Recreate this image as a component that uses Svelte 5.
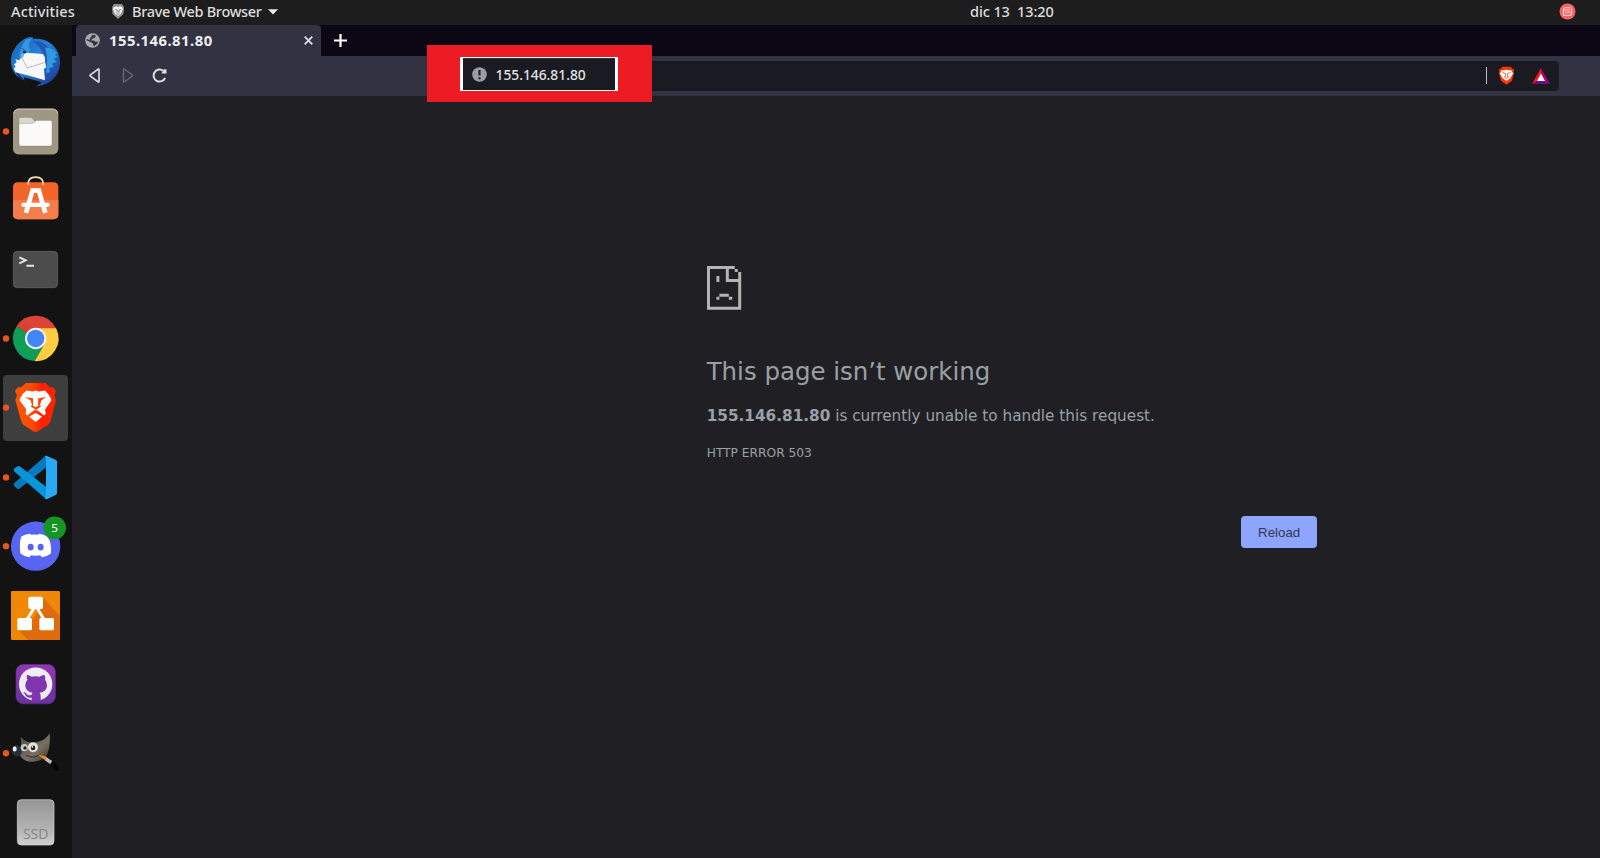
<script>
  const dock = [
    { id: 'mail', y: 10.2, dot: null },
    { id: 'files', y: 217.8, dot: 321 },
    { id: 'software', y: 425.4, dot: null },
    { id: 'terminal', y: 15, dot: null },
    { id: 'chrome', y: 222.6, dot: 326 },
    { id: 'brave', y: 430.2, dot: 534 },
    { id: 'code', y: 7.8, dot: 111 },
    { id: 'discord', y: 215.4, dot: 318 },
    { id: 'diagram', y: 423, dot: null },
    { id: 'github', y: 0.6, dot: null },
    { id: 'gimp', y: 208.2, dot: 311 },
    { id: 'disk', y: 415.8, dot: null }
  ];
  const host = '155.146.81.80';
</script>

<div class="screen">
  <header class="topbar">
    <span class="activities">Activities</span>
    <svg class="lion-grey" viewBox="0 0 14 17"><path d="M3 1h8l2 3-.5 7L7 16 1.500 11 1 4z" fill="#8e8e8e"/><path d="M3 4l2-.8L7 4l2-.8L11 4l1 2-2 5-3 2-3-2-2-5z" fill="#f2f2f2"/><path d="M4.200 6.500l2 .8-.3 2.500M9.800 6.500l-2 .8.3 2.500M5.500 11h3" fill="none" stroke="#777" stroke-width=".9"/></svg>
    <span class="app-name">Brave Web Browser</span>
    <svg class="caret" viewBox="0 0 10 6"><path d="M0 .3h10L5 5.600z" fill="#ededed"/></svg>
    <span class="clock">dic 13&nbsp; 13:20</span>
    <svg class="tray" viewBox="0 0 17 17"><circle cx="8.500" cy="8.500" r="8" fill="#f96363"/><path d="M12 4.700H5.500l-1 1v6.500h7l1-1V5.500M4.500 7h6.500M6 9.300h5.500" fill="none" stroke="#ffd5cf" stroke-width="1.100"/></svg>
  </header>

  <div class="workspace">
    <nav class="dock">
      {#each dock as item (item.id)}
        <div class="dock-item" class:active={item.id === 'brave'}>
          <svg viewBox="0 {item.y} 216 207.6">
            {#if item.dot}<circle cx="18" cy={item.dot} r="9.500" fill="#e95420"/>{/if}
            {#if item.id === 'mail'}
              <defs><linearGradient id="bird" x1="0" y1="0" x2="1" y2="1"><stop offset="0" stop-color="#1761b8"/><stop offset=".45" stop-color="#2482d6"/><stop offset="1" stop-color="#1d2f91"/></linearGradient></defs>
              <path d="M70 48Q85 36 101 42L96 46C145 40 180 73 180 115C180 157 150 184 108 188L126 176L70 160L74 171C48 162 33 139 33 112C33 86 48 64 70 48Z" fill="url(#bird)"/>
              <path d="M47 143l28 29q-22-8-28-29z" fill="#241052"/>
              <path d="M97 52q44-2 55 35l-14 42q-5-55-41-77z" fill="#2458b5"/>
              <path d="M135 72q20 0 37 16l-8 6 9 5-12 8 10 8-15 5 5 10-14 4 3 12-12 2q8-38-3-76z" fill="#2e9ae0"/>
              <path d="M72 87L128 91Q138 100 135 114L139 131L132 136L135 170Q95 158 47 146L41 135L47 130L42 122L50 116L46 107L58 110Z" fill="#f7f7f8"/>
              <path d="M63 98l19 35 54-17" fill="none" stroke="#a9adb3" stroke-width="2.500"/>
              <path d="M98 44Q78 61 91 82Q83 86 72 88L58 105Q57 75 78 48Z" fill="#3896dc"/>
              <path d="M63 93l11-6-4 13-7 5z" fill="#6cb3df"/>
              <circle cx="74" cy="85" r="5" fill="#153158"/><path d="M60 72q12 3 15 12" fill="none" stroke="#2067ad" stroke-width="3"/>
            {:else if item.id === 'files'}
              <rect x="39" y="253" width="136" height="137" rx="16" fill="#9e9783"/><path d="M42 267q2-13 14-13h102q12 0 15 13" fill="none" stroke="#d2c9b8" stroke-width="3"/>
              <path d="M58 284q0-4 5-4h29q4 0 6 4l7 8v62H58z" fill="#d9d6ca"/>
              <path d="M57 297h39q5 0 9-5l4-4h43q4 0 4 5v66q0 6-6 6H64q-7 0-7-7z" fill="#fbfaf8" stroke="#807a69" stroke-width="1"/>
            {:else if item.id === 'software'}
              <rect x="39" y="474" width="136" height="111" rx="14" fill="#f2652a"/><path d="M39 528h136v43q0 14-14 14H53q-14 0-14-14z" fill="#f47e4b"/>
              <path d="M85 482q-3-23 22-23t22 23" fill="none" stroke="#f7e3b1" stroke-width="5"/>
              <g fill="none" stroke="#fff"><path d="M99 493L78 566M115 493l21 73" stroke-width="14"/><path d="M96 499h22" stroke-width="14"/><path d="M70 542h73" stroke-width="13" stroke-linecap="round"/></g>
            {:else if item.id === 'terminal'}
              <rect x="40" y="64" width="133" height="109" rx="12" fill="#4c4c4c" stroke="#686868" stroke-width="2"/>
              <path d="M58 82l19 9-19 9M79 107h23" fill="none" stroke="#e5e5e5" stroke-width="6"/>
            {:else if item.id === 'chrome'}
              <path d="M107 326L50 289A68 68 0 0 1 168 295Z" fill="#db4437"/>
              <path d="M107 326L50 289A68 68 0 0 0 104 394L133 343Z" fill="#0f9d58"/>
              <path d="M107 326L50 289l8-10 49 16h61q4 8 4 13h-65z" fill="#d6422f"/>
              <path d="M107 295h61A68 68 0 0 1 104 394L134 342Z" fill="#ffcd40"/>
              <circle cx="107" cy="326" r="32" fill="#f2f2f2"/><circle cx="107" cy="326" r="26" fill="#4285f4"/>
            {:else if item.id === 'brave'}
              <defs><linearGradient id="flame"><stop offset="0" stop-color="#ff5500"/><stop offset=".42" stop-color="#ff4b00"/><stop offset=".65" stop-color="#ff2000"/><stop offset="1" stop-color="#ff2500"/></linearGradient></defs>
              <path d="M77 460H137L149 473Q158 469 168 484L163 498L168 511L152 573Q150 581 144 586L115 604Q107 610 99 604L71 586Q65 581 63 573L46 511L51 498L45 484Q54 469 64 473Z" fill="url(#flame)"/>
              <path d="M80 483l18 3 9-3 10 3 18-3q8 7 17 22 2 5 2 8l-18 25q-2 4 1 11 1 6-5 9l-19-15-6-2-6 2-19 15q-6-3-5-9 3-7 1-11l-19-25q-1-3 2-8 8-15 19-22z" fill="#fff"/>
              <path d="M76 502q13 2 23 4l1 17-2 5 9 5 9-5-2-5 1-17 23-4-14 11-4 13 3 5-11 7-4 3-4-3-12-7 4-5-4-13z" fill="#ff4300"/>
              <path d="M102 505h10l1 22-6 4-6-4z" fill="#fff"/>
              <path d="M107 550l19 11q-7 8-19 16-12-8-19-16z" fill="#fff"/>
            {:else if item.id === 'code'}
              <path d="M138 45L43 128Q39 133 44 138L52 145Q57 147 61 143L138 81z" fill="#0879bf"/>
              <path d="M52 78Q57 75 61 79L138 139V176L43 93Q39 88 44 83z" fill="#0995dc"/>
              <path d="M134 48Q136 44 141 47L168 59Q171 61 171 64V158Q171 161 168 163L142 176Q137 178 134 173L138 170V52z" fill="#29a9f2"/>
            {:else if item.id === 'discord'}
              <circle cx="107" cy="318" r="74" fill="#5865f2"/>
              <path d="M94 284l-5-3q-15 2-25 8-7 18-3 51 14 11 28 11l6-10q12 3 24 0l6 10q15-1 28-11 3-35-12-51-10-6-23-8l-5 3q-9-2-19 0z" fill="#fff"/><path d="M76 337q31 14 62 0" fill="none" stroke="#fff" stroke-width="6"/>
              <ellipse cx="92" cy="321" rx="9" ry="10" fill="#5865f2"/><ellipse cx="122" cy="321" rx="9" ry="10" fill="#5865f2"/>
              <circle cx="164" cy="263" r="34" fill="#149623"/>
              <text x="164" y="276" text-anchor="middle" class="badge">5</text>
            {:else if item.id === 'diagram'}
              <rect x="33" y="453" width="147" height="147" rx="4" fill="#f08705"/>
              <path d="M130 473l50 56v68q0 3-4 3H85l-31-30 40-25 22-35z" fill="#df6c0c"/>
              <path d="M105 500L75 548M109 500l29 48" fill="none" stroke="#fff" stroke-width="9"/>
              <g fill="#fff"><rect x="85" y="470" width="44" height="37" rx="5"/><rect x="52" y="534" width="44" height="37" rx="5"/><rect x="118" y="534" width="44" height="37" rx="5"/></g>
            {:else if item.id === 'github'}
              <defs><linearGradient id="plum" x2="0" y2="1"><stop stop-color="#9237b5"/><stop offset="1" stop-color="#66339b"/></linearGradient></defs>
              <rect x="48" y="44" width="118" height="118" rx="22" fill="url(#plum)" stroke="#6c2c8d" stroke-width="2"/>
              <circle cx="107" cy="103" r="50" fill="#efedf4"/>
              <path d="M80 76q7-1 15 5 12-3 24 0 8-6 15-5 3 8 1 14 6 6 6 17 0 19-22 22 3 4 3 10v16H95v-12q-14 4-19-8-2-5-7-7 7-3 12 5 6 6 14 2 0-4 3-6-22-3-22-22 0-11 6-17-2-6-2-14z" fill="#7f35ad"/>
            {:else if item.id === 'gimp'}
              <defs><linearGradient id="fur" x2="1" y2="1"><stop stop-color="#4e493f"/><stop offset=".6" stop-color="#777064"/><stop offset="1" stop-color="#37332d"/></linearGradient></defs>
              <path d="M62 261q10 14 26 17 14 3 29-2 22-7 32-26 3 38-6 60-10 22-38 26-29 4-44-16l-5-10q11-15 6-49z" fill="url(#fur)"/>
              <ellipse cx="50" cy="304" rx="15" ry="17" fill="#26303a" transform="rotate(-18 50 304)"/><ellipse cx="44" cy="298" rx="6" ry="8" fill="#e9eef2"/>
              <circle cx="73" cy="294" r="11" fill="#c9c8c3"/><circle cx="99" cy="293" r="15" fill="#e5e3de"/><circle cx="75" cy="295" r="5" fill="#222"/><circle cx="99" cy="295" r="7" fill="#222"/><circle cx="97" cy="292" r="2.500" fill="#fff"/>
              <path d="M78 317q24 12 43-3" fill="none" stroke="#302d28" stroke-width="3"/>
              <path d="M113 315l26 6 7 9-7 5z" fill="#e88a22"/><path d="M140 324l17 10-6 10-15-11z" fill="#b9bec0"/><path d="M157 334q15 5 20 32-19-7-26-22z" fill="#030303"/>
            {:else}
              <defs><linearGradient id="metal" x2="0" y2="1"><stop stop-color="#959595"/><stop offset=".65" stop-color="#b3b3b3"/><stop offset="1" stop-color="#d0d0d0"/></linearGradient></defs>
              <rect x="52" y="451" width="110" height="136" rx="12" fill="url(#metal)" stroke="#dadada" stroke-width="2"/>
              <text x="107" y="570" text-anchor="middle" class="disk-label">SSD</text>
            {/if}
          </svg>
        </div>
      {/each}
    </nav>

    <main class="browser">
      <div class="tabstrip">
        <div class="tab">
          <svg class="globe" viewBox="0 0 15 15"><circle cx="7.500" cy="7.500" r="7.300" fill="#a9a9ad"/><path d="M7 2q3.500-.5 4 1L9.500 5 7.500 5.500 6 7.500l3 .1 1.300 1.200 3-.3q-.8 3.500-4 4.500L8 12.500l.3-1.700L6 9.200 1.500 7.300 1.700 6l3 1L5 5l1.300-1.300z" fill="#353541"/></svg>
          <span class="tab-title">{host}</span>
          <svg class="close" viewBox="0 0 9 9"><path d="M.7 .7l7.600 7.600M8.300 .7L.7 8.300" fill="none" stroke="#e0e0e3" stroke-width="1.800"/></svg>
        </div>
        <svg class="plus" viewBox="0 0 13 13"><path d="M6.500 0v13M0 6.500h13" fill="none" stroke="#fff" stroke-width="2.200"/></svg>
      </div>

      <div class="toolbar">
        <svg class="back" viewBox="0 0 12 15"><path d="M10 1.500v12q-.1 1-1 .3L1.400 8.200q-.8-.7 0-1.400L9 1.200q.9-.6 1 .3z" fill="none" stroke="#d8d8dd" stroke-width="1.700"/></svg>
        <svg class="forward" viewBox="0 0 12 15"><path d="M1.500 1.500v12q.1 1 1 .3l7.600-5.600q.8-.7 0-1.400L2.500 1.200q-.9-.6-1 .3z" fill="none" stroke="#686875" stroke-width="1.400"/></svg>
        <svg class="reload" viewBox="0 0 15 15"><path d="M13.100 9.800A6 6 0 1 1 11.500 3" fill="none" stroke="#dedee3" stroke-width="2"/><path d="M9.300 5.600h5.200V1.500L12.500 1z" fill="#dedee3"/></svg>
        <div class="address-bar">
          <span class="divider"></span>
          <svg class="shield" viewBox="0 0 17 19"><path d="M4.500.7h8l1.500 1.700 2.200 1-.5 2.600.4 1-2.200 7.800-5.400 4-5.400-4L.8 7l.5-1-.5-2.600 2.200-1z" fill="#fb3506"/><path d="M3.500 4.500l5-.7 5 .7 1.500 3-2.500 4.500L8.500 15l-4-3L2 7.500z" fill="#fff"/><path d="M4.500 6.500l3 1-.3 3.500M12.500 6.500l-3 1 .3 3.500M6.200 11l2.300 1.500 2.300-1.500" fill="none" stroke="#f2633f" stroke-width="1"/></svg>
          <svg class="bat" viewBox="0 0 18 16" preserveAspectRatio="none"><path d="M9 0L0 16l5.500-3L9 7z" fill="#ff180e"/><path d="M9 0v7l3.500 6L18 16z" fill="#b1006c"/><path d="M0 16h18l-5.500-3h-7z" fill="#65108c"/><path d="M9 5.600l4 7.400H5z" fill="#fff"/></svg>
        </div>
        <div class="highlight">
          <div class="highlight-inner">
            <svg class="info" viewBox="0 0 15 15"><circle cx="7.500" cy="7.500" r="7.300" fill="#9b9ca3"/><path d="M7.500 3v5.500M7.500 10.200v2" stroke="#1d1e26" stroke-width="2.100"/></svg>
            <span class="url">{host}</span>
          </div>
        </div>
      </div>

      <section class="page">
        <div class="error">
          <svg class="sad" viewBox="0 0 34.5 44" preserveAspectRatio="none"><path d="M0 0h28v3h3v3h3.500v38H0zM3 3v38h28.500V16H19V3zM22 3v10h9.500V6H28V3zM9.500 10h3v6h-3zM12.500 28H22v3h-9.500zM9.500 31h3v3h-3zM22 31h3.500v3H22z" fill="#b4b4b4" fill-rule="evenodd"/></svg>
          <h1>This page isn’t working</h1>
          <p><strong>{host}</strong> is currently unable to handle this request.</p>
          <div class="code">HTTP ERROR 503</div>
          <div class="actions"><button>Reload</button></div>
        </div>
      </section>
    </main>
  </div>
</div>

<style>
  :global(body) { margin: 0; background: #202024; overflow: hidden; }
  .screen { width: 1600px; height: 858px; display: flex; flex-direction: column; font-family: "Noto Sans", "Open Sans", sans-serif; }
  svg { display: block; flex: none; overflow: visible; }
  .topbar { height: 25px; box-sizing: border-box; padding-bottom: 3px; display: flex; align-items: center; background: #1d1d1d; color: #dedede; font-size: 14.5px; line-height: 22px; white-space: nowrap; font-weight: 500; }
  .activities { width: 100px; padding-left: 11px; letter-spacing: .15px; }
  .lion-grey { width: 14px; height: 17px; }
  .app-name { width: 131px; margin-left: 7px; letter-spacing: -.31px; }
  .caret { width: 10px; height: 6px; margin-left: 5px; margin-top: 1px; }
  .clock { width: 85px; margin-left: 692px; letter-spacing: -.1px; }
  .tray { width: 17px; height: 17px; margin-left: auto; margin-right: 24px; }
  .workspace { flex: 1; display: flex; min-height: 0; }
  .dock { width: 72px; box-sizing: border-box; padding-top: 2.4px; background: #131313; flex: none; }
  .dock-item { height: 69.2px; box-sizing: border-box; position: relative; }
  .dock-item svg { position: relative; width: 72px; height: 69.2px; }
  .active::before { content: ""; position: absolute; left: 3px; right: 4px; top: 1.8px; bottom: 2px; border-radius: 4px; background: #3e3e3e; }
  .badge { font: 35px "Noto Sans", sans-serif; fill: #fff; }
  .disk-label { font: 42px "Open Sans", sans-serif; fill: #858585; }
  .browser { flex: 1; display: flex; flex-direction: column; min-width: 0; }
  .tabstrip { height: 31px; display: flex; align-items: flex-start; background: #0c0715; }
  .tab { box-sizing: border-box; width: 245px; height: 31px; margin-left: 4px; padding: 0 8px 0 9px; border-radius: 4px 4px 0 0; background: #323243; display: flex; align-items: center; }
  .globe { width: 15px; height: 15px; }
  .tab-title { margin-left: 9px; margin-top: -2px; color: #ededf0; font-size: 14.8px; font-weight: 700; letter-spacing: .5px; }
  .close { width: 9px; height: 9px; margin-left: auto; }
  .plus { width: 13px; height: 13px; margin: 9px 0 0 13px; }
  .toolbar { height: 40px; display: flex; align-items: center; position: relative; background: #323243; }
  .back { width: 12px; height: 15px; margin-left: 17px; margin-top: -2px; }
  .forward { width: 12px; height: 15px; margin-left: 20.5px; margin-top: -2px; }
  .reload { width: 15px; height: 15px; margin-left: 18.5px; margin-top: -2px; }
  .address-bar { box-sizing: border-box; height: 30px; margin-left: auto; margin-right: 41px; margin-top: -1px; width: 1099px; padding-right: 9px; border-radius: 4px; background: #1a1a22; display: flex; align-items: center; justify-content: flex-end; }
  .divider { width: 1px; height: 17px; background: #bdbdc2; margin-right: 11px; }
  .shield { width: 17px; height: 19px; margin-right: 17px; }
  .bat { width: 18px; height: 16px; margin-top: 1px; }
  .highlight { position: absolute; left: 354.5px; top: -11px; width: 225px; height: 56.500px; box-sizing: border-box; padding: 11.500px 33px; background: #ed1c24; }
  .highlight-inner { height: 34px; width: 158.500px; box-sizing: border-box; border: solid #fff; border-width: 1px 3px; background: linear-gradient(#323243 1.500px, #1a1a22 1.500px); display: flex; align-items: center; padding-left: 9px; }
  .info { width: 15px; height: 15px; margin-top: 2px; }
  .url { margin: 2px 0 0 9px; font-size: 13.8px; font-weight: 500; color: #e3e3e5; }
  .page { flex: 1; background: #202024; }
  .error { width: 610.500px; margin-left: 634.700px; padding-top: 170px; color: #9aa0a6; font-family: "DejaVu Sans", sans-serif; }
  .sad { width: 34.200px; height: 43.700px; }
  h1 { margin: 47.300px 0 0; font-size: 24.450px; line-height: 30px; font-weight: 500; }
  p { margin: 19px 0 0; font-size: 15.270px; line-height: 20px; }
  .code { margin-top: 19px; font-size: 12.220px; line-height: 16px; }
  .actions { display: flex; justify-content: flex-end; margin-top: 55.400px; }
  button { width: 76px; height: 32px; padding: 0; border: 0; border-radius: 4px; background: #8ea5fd; color: #33364d; font: 13.300px "Liberation Sans", Arial, sans-serif; }
</style>
